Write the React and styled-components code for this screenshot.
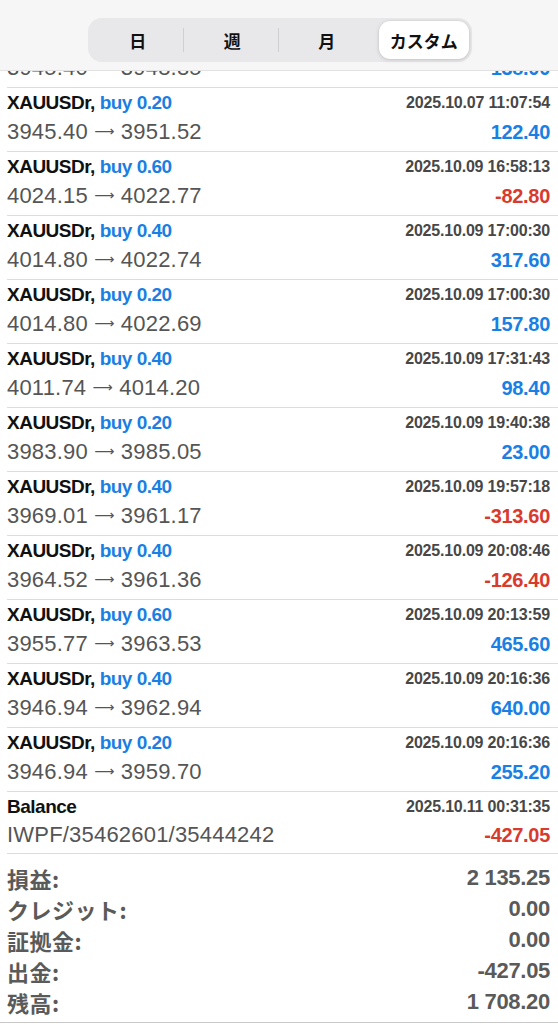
import React from 'react'
import styled, { createGlobalStyle } from 'styled-components'

const GlobalStyle = createGlobalStyle`
  html, body {
    margin: 0;
    padding: 0;
    background: #ffffff;
  }
  body {
    font-family: "Liberation Sans", Arial, "Noto Sans CJK JP", sans-serif;
    -webkit-font-smoothing: antialiased;
  }
`

const Page = styled.div`
  position: relative;
  width: 558px;
  height: 1024px;
  overflow: hidden;
  background: #fff;
`

const Header = styled.div`
  position: absolute;
  top: 0;
  left: 0;
  right: 0;
  z-index: 2;
  height: 71px;
  display: flex;
  align-items: flex-start;
  justify-content: center;
  padding-top: 18px;
  box-sizing: border-box;
  background: #f6f6f6;
  border-bottom: 1px solid #e2e2e2;
`

const Segmented = styled.div`
  display: grid;
  grid-template-columns: repeat(4, 1fr);
  width: 384px;
  height: 44px;
  padding: 3px;
  box-sizing: border-box;
  margin-left: 1px;
  background: #e8e8ea;
  border-radius: 14px;
`

const Segment = styled.div`
  position: relative;
  display: flex;
  align-items: center;
  justify-content: center;
  border-radius: 11px;
  font-family: "Noto Sans CJK JP", "Liberation Sans", sans-serif;
  font-size: 17px;
  line-height: 1;
  font-weight: 700;
  color: #111;
  background: ${(p) => (p.$active ? '#ffffff' : 'transparent')};
  box-shadow: ${(p) => (p.$active ? '0 1px 4px rgba(0,0,0,0.14), 0 0 0 0.5px rgba(0,0,0,0.05)' : 'none')};
  margin-left: ${(p) => (p.$active ? '5px' : '0')};
`

const Divider = styled.span`
  position: absolute;
  right: 1px;
  top: 7px;
  bottom: 7px;
  width: 1px;
  background: #cfcfd3;
`

const List = styled.div`
  display: flex;
  flex-direction: column;
  padding-top: 24px;
`

const Row = styled.div`
  display: flex;
  flex-direction: column;
  height: ${(p) => p.$h}px;
  margin-left: 7px;
  padding: 3px 8px 0 0;
  box-sizing: border-box;
  border-bottom: 1px solid #dcdcdc;
`

const Line = styled.div`
  display: flex;
  align-items: center;
  justify-content: space-between;
  height: ${(p) => p.$h}px;
  white-space: nowrap;
`

const Title = styled.span`
  font-size: 19px;
  font-weight: 700;
  letter-spacing: -0.5px;
  color: #111;
`

const Side = styled.span`
  color: #1a7fe4;
`

const Stamp = styled.span`
  font-size: 16px;
  font-weight: 700;
  letter-spacing: -0.2px;
  color: #474747;
`

const Prices = styled.span`
  font-size: 22px;
  letter-spacing: 0.2px;
  color: #555;
`

const Arrow = styled.span`
  font-family: "DejaVu Sans", sans-serif;
  font-size: 14px;
  vertical-align: 3px;
  color: #555;
`

const Profit = styled.span`
  font-size: 20px;
  font-weight: 700;
  letter-spacing: -0.3px;
  color: ${(p) => (p.$neg ? '#d93a2e' : '#1a7fe4')};
`

const Summary = styled.div`
  display: flex;
  flex-direction: column;
  padding: 8px 8px 5px 7px;
  border-bottom: 1px solid #c8c8c8;
`

const SumRow = styled.div`
  display: flex;
  align-items: center;
  justify-content: space-between;
  height: 31px;
  font-size: 22px;
  font-weight: 700;
  color: #5a5a5a;
`

const SumLabel = styled.span`
  font-family: "Noto Sans CJK JP", "Liberation Sans", sans-serif;
  font-size: 22px;
  letter-spacing: 0.5px;
`

const SumValue = styled.span`
  letter-spacing: -0.3px;
`

const tabs = ['日', '週', '月', 'カスタム']

const deals = [
  ['0.40', null, '3945.40', '3948.85', '138.00'],
  ['0.20', '2025.10.07 11:07:54', '3945.40', '3951.52', '122.40'],
  ['0.60', '2025.10.09 16:58:13', '4024.15', '4022.77', '-82.80'],
  ['0.40', '2025.10.09 17:00:30', '4014.80', '4022.74', '317.60'],
  ['0.20', '2025.10.09 17:00:30', '4014.80', '4022.69', '157.80'],
  ['0.40', '2025.10.09 17:31:43', '4011.74', '4014.20', '98.40'],
  ['0.20', '2025.10.09 19:40:38', '3983.90', '3985.05', '23.00'],
  ['0.40', '2025.10.09 19:57:18', '3969.01', '3961.17', '-313.60'],
  ['0.40', '2025.10.09 20:08:46', '3964.52', '3961.36', '-126.40'],
  ['0.60', '2025.10.09 20:13:59', '3955.77', '3963.53', '465.60'],
  ['0.40', '2025.10.09 20:16:36', '3946.94', '3962.94', '640.00'],
  ['0.20', '2025.10.09 20:16:36', '3946.94', '3959.70', '255.20'],
]

const totals = [
  ['損益:', '2 135.25'],
  ['クレジット:', '0.00'],
  ['証拠金:', '0.00'],
  ['出金:', '-427.05'],
  ['残高:', '1 708.20'],
]

const App = () => (
  <Page>
    <GlobalStyle />
    <Header>
      <Segmented>
        {tabs.map((t, i) => (
          <Segment key={t} $active={i === 3}>
            {t}
            {i < 2 && <Divider />}
          </Segment>
        ))}
      </Segmented>
    </Header>
    <List>
      {deals.map(([vol, time, from, to, profit], i) => (
        <Row key={i} $h={64}>
          <Line $h={24}>
            {time && (
              <>
                <Title>
                  XAUUSDr, <Side>buy {vol}</Side>
                </Title>
                <Stamp>{time}</Stamp>
              </>
            )}
          </Line>
          <Line $h={34}>
            <Prices>
              {from} <Arrow>⟶</Arrow> {to}
            </Prices>
            <Profit $neg={profit.startsWith('-')}>{profit}</Profit>
          </Line>
        </Row>
      ))}
      <Row $h={62}>
        <Line $h={24}>
          <Title>Balance</Title>
          <Stamp>2025.10.11 00:31:35</Stamp>
        </Line>
        <Line $h={32}>
          <Prices>IWPF/35462601/35444242</Prices>
          <Profit $neg>-427.05</Profit>
        </Line>
      </Row>
    </List>
    <Summary>
      {totals.map(([label, value]) => (
        <SumRow key={label}>
          <SumLabel>{label}</SumLabel>
          <SumValue>{value}</SumValue>
        </SumRow>
      ))}
    </Summary>
  </Page>
)

export default App
